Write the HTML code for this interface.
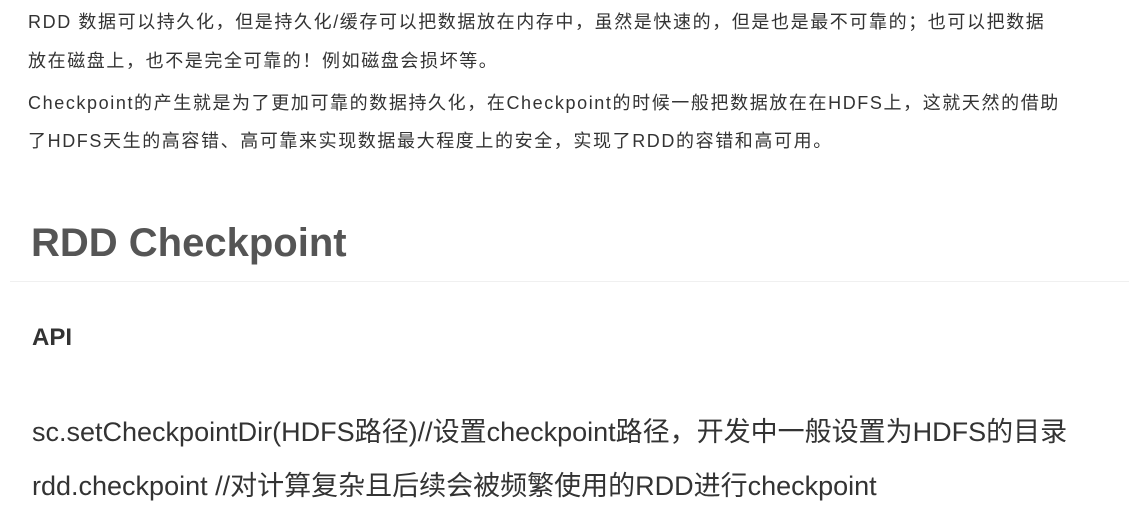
<!DOCTYPE html>
<html><head><meta charset="utf-8"><style>
body{margin:0;background:#fff;width:1129px;height:529px;overflow:hidden;font-family:"Liberation Sans","Noto Sans CJK SC",sans-serif;color:#333;}
.p{position:absolute;left:28px;font-size:18px;letter-spacing:1.6px;white-space:nowrap;line-height:20px;}
h1{position:absolute;left:31px;top:218px;margin:0;font-size:40px;font-weight:bold;color:#555;line-height:50px;}
.hr{position:absolute;left:10px;right:0;top:281px;height:1px;background:#f0f0f0;}
.api{position:absolute;left:32px;top:323px;font-size:24px;font-weight:bold;color:#333;line-height:30px;}
.c{position:absolute;left:32px;font-size:27px;white-space:nowrap;line-height:30px;color:#333;}
</style></head><body>
<div class="p" style="top:12px">RDD 数据可以持久化，但是持久化/缓存可以把数据放在内存中，虽然是快速的，但是也是最不可靠的；也可以把数据</div>
<div class="p" style="top:51px">放在磁盘上，也不是完全可靠的！例如磁盘会损坏等。</div>
<div class="p" style="top:93px">Checkpoint的产生就是为了更加可靠的数据持久化，在Checkpoint的时候一般把数据放在在HDFS上，这就天然的借助</div>
<div class="p" style="top:131px">了HDFS天生的高容错、高可靠来实现数据最大程度上的安全，实现了RDD的容错和高可用。</div>
<h1>RDD Checkpoint</h1>
<div class="hr"></div>
<div class="api">API</div>
<div class="c" style="top:417px">sc.setCheckpointDir(HDFS路径)//设置checkpoint路径，开发中一般设置为HDFS的目录</div>
<div class="c" style="top:471px">rdd.checkpoint //对计算复杂且后续会被频繁使用的RDD进行checkpoint</div>
</body></html>
